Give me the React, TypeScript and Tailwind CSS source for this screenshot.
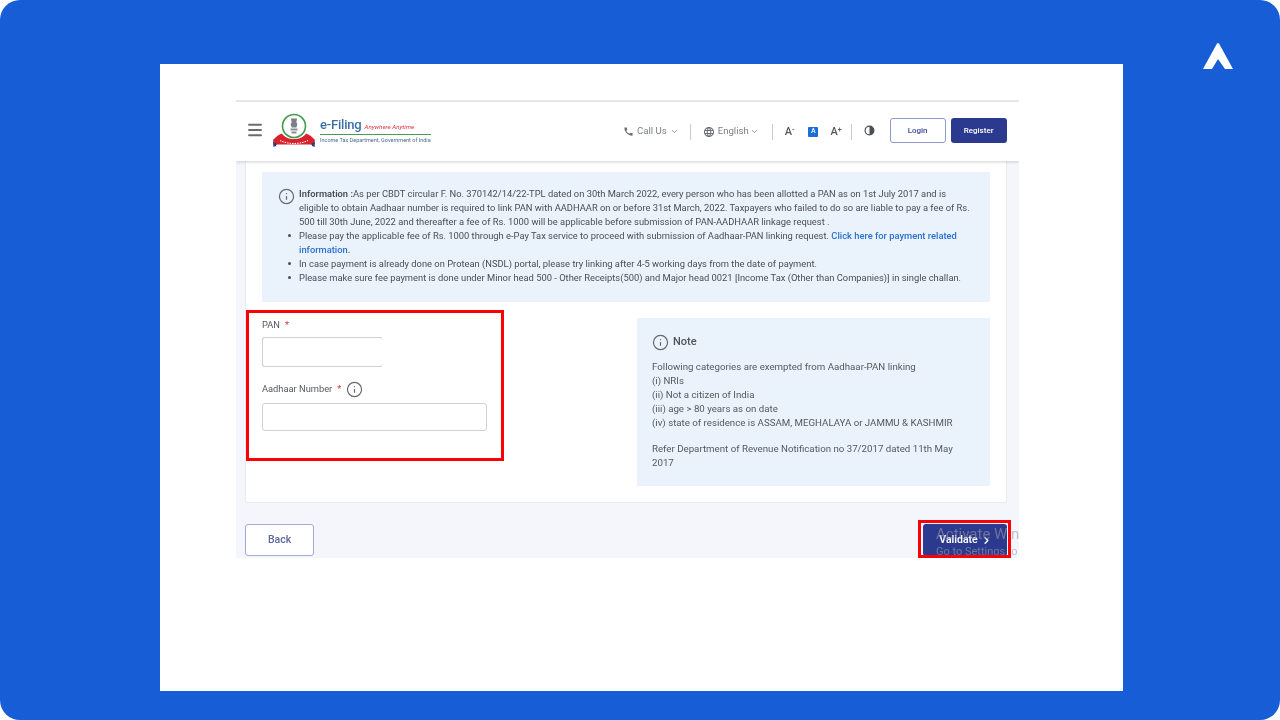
import { ChevronDown, ChevronRight, Info, Menu } from "lucide-react";
import { MdCall, MdLanguage } from "react-icons/md";

function Emblem() {
  return (
    <svg width="44" height="34" viewBox="0 0 44 34" className="shrink-0">
      <circle cx="22" cy="13" r="11.5" fill="none" stroke="#3f9a4a" strokeWidth="1.6" />
      <circle cx="22" cy="13" r="9.5" fill="#fff" />
      <path d="M19 5.5h6l-.6 4 1 1.5-1 3.5h-4.8l-1-3.500 1-1.500z" fill="#7a7f86" />
      <path d="M18.500 15.500h7v2h-7zM19.500 18.500h5v2h-5z" fill="#8b8f95" />
      <path d="M1 27c3-3.500 6-5.500 9-6.500 2 3.500 6.500 5.500 12 5.500s10-2 12-5.500c3 1 6 3 9 6.500l-1 6-3.500-1.500H5.500L2 33z" fill="#d8232f" />
      <path d="M8 27.500c4 2 9 3 14 3s10-1 14-3" fill="none" stroke="#fff" strokeWidth="1" strokeDasharray="1.500 1" />
      <path d="M1 29l3 1v3l-2.500 1zM43 29l-3 1v3l2.500 1z" fill="#263f8f" />
    </svg>
  );
}

function ContrastIcon() {
  return (
    <svg width="11" height="11" viewBox="0 0 12 12">
      <circle cx="6" cy="6" r="4.800" fill="#fff" stroke="#4b4f55" strokeWidth="1.300" />
      <path d="M6 1.200a4.800 4.800 0 0 1 0 9.600z" fill="#4b4f55" />
    </svg>
  );
}

function Divider() {
  return <div className="h-[16px] w-px bg-[#c9ccd1]" />;
}

function Bullet() {
  return <span className="absolute left-[-11px] top-[5px] h-[3px] w-[3px] rounded-full bg-[#4a4d54]" />;
}

function Header() {
  return (
    <header className="relative z-10 flex h-[59px] items-center bg-white pl-[10px] shadow-[0_1px_3px_rgba(0,0,0,0.18)]">
      <Menu size={18} strokeWidth={2.5} className="mb-[3px] text-[#6a6d72]" />
      <div className="mb-[4px] ml-[8px]">
        <Emblem />
      </div>
      <div className="ml-[4px] mt-[-2px] w-[111px]">
        <div className="flex h-[15px] items-baseline gap-[3px] leading-none">
          <span className="text-[13px] font-medium tracking-[-0.2px] text-[#3c6fa8]">e-Filing</span>
          <span className="text-[6.200px] italic text-[#e3323f]">Anywhere Anytime</span>
        </div>
        <div className="mt-[1px] h-px bg-[#4a9c52]" />
        <div className="mt-[1px] whitespace-nowrap text-[5.500px] leading-[8px] text-[#4b6d95]">
          Income Tax Department, Government of India
        </div>
      </div>
      <div className="ml-[192px] flex items-center text-[9.600px] text-[#7c7f84]">
        <MdCall size={11} className="text-[#6a6d72]" />
        <span className="ml-[3px]">Call Us</span>
        <ChevronDown size={9} className="ml-[3px]" />
        <div className="ml-[11px]">
          <Divider />
        </div>
        <MdLanguage size={12} className="ml-[12px] text-[#6a6d72]" />
        <span className="ml-[3px]">English</span>
        <ChevronDown size={9} className="ml-[1px]" />
        <div className="ml-[13px]">
          <Divider />
        </div>
        <span className="ml-[12px] text-[11px] font-medium leading-none text-[#55585d]">
          A<sup className="text-[7px]">-</sup>
        </span>
        <span className="ml-[14px] flex h-[10px] w-[10px] items-center justify-center rounded-[1px] bg-[#1a6fd8] text-[7px] font-medium text-white">
          A
        </span>
        <span className="ml-[12px] text-[11px] font-medium leading-none text-[#55585d]">
          A<sup className="text-[7px]">+</sup>
        </span>
        <div className="ml-[9px]">
          <Divider />
        </div>
        <div className="mb-[3px] ml-[12px]">
          <ContrastIcon />
        </div>
        <button className="mb-[2px] ml-[15px] flex h-[25px] w-[56px] items-center justify-center rounded-[3px] border-[1.500px] border-[#8f97cf] bg-white text-[8px] font-medium text-[#3d4a96]">
          Login
        </button>
        <button className="mb-[2px] ml-[5px] flex h-[25px] w-[56px] items-center justify-center rounded-[3px] bg-[#2b3a8f] text-[8px] font-medium text-white">
          Register
        </button>
      </div>
    </header>
  );
}

function InfoPanel() {
  return (
    <div className="flex h-[130px] bg-[#eaf3fc] pl-[16px] pt-[15px] text-[9.360px] leading-[14px] text-[#4a4d54]">
      <Info size={17} strokeWidth={1.7} className="mt-px shrink-0 text-[#65686e]" />
      <div className="ml-[4px] whitespace-nowrap">
        <p>
          <b className="font-semibold">Information :</b>As per CBDT circular F. No. 370142/14/22-TPL dated on 30th March
          2022, every person who has been allotted a PAN as on 1st July 2017 and is
          <br />
          eligible to obtain Aadhaar number is required to link PAN with AADHAAR on or before 31st March, 2022. Taxpayers
          who failed to do so are liable to pay a fee of Rs.
          <br />
          500 till 30th June, 2022 and thereafter a fee of Rs. 1000 will be applicable before submission of PAN-AADHAAR
          linkage request .
        </p>
        <ul>
          <li className="relative">
            <Bullet />
            Please pay the applicable fee of Rs. 1000 through e-Pay Tax service to proceed with submission of Aadhaar-PAN
            linking request.{" "}
            <span className="font-medium text-[#2a6fd0]">
              Click here for payment related
              <br />
              information.
            </span>
          </li>
          <li className="relative">
            <Bullet />
            In case payment is already done on Protean (NSDL) portal, please try linking after 4-5 working days from the
            date of payment.
          </li>
          <li className="relative">
            <Bullet />
            Please make sure fee payment is done under Minor head 500 - Other Receipts(500) and Major head 0021 [Income
            Tax (Other than Companies)] in single challan.
          </li>
        </ul>
      </div>
    </div>
  );
}

function Form() {
  return (
    <div className="w-[375px] text-[9.300px] text-[#55585f]">
      <div className="flex h-[14px] items-center">
        PAN <span className="ml-[5px] text-[#e3323f]">*</span>
      </div>
      <div className="mt-[5px] h-[30px] w-[121px] rounded-[3px] border-[1.500px] border-[#cfd1d4] border-r-transparent bg-white" />
      <div className="mt-[14px] flex h-[16px] items-center">
        Aadhaar Number <span className="ml-[5px] text-[#e3323f]">*</span>
        <Info size={17} strokeWidth={1.7} className="ml-[5px] text-[#65686e]" />
      </div>
      <div className="mt-[6px] h-[28px] w-[225px] rounded-[3px] border-[1.500px] border-[#cfd1d4] bg-white" />
    </div>
  );
}

function Note() {
  return (
    <div className="h-[168px] w-[353px] bg-[#eaf3fc] px-[15px] pt-[16px] text-[9.700px] leading-[14px] text-[#55585f]">
      <div className="flex h-[16px] items-center text-[11px] font-medium text-[#50535a]">
        <Info size={17} strokeWidth={1.7} className="mr-[4px] text-[#65686e]" />
        Note
      </div>
      <p className="mt-[10px]">
        Following categories are exempted from Aadhaar-PAN linking
        <br />
        (i) NRIs
        <br />
        (ii) Not a citizen of India
        <br />
        (iii) age &gt; 80 years as on date
        <br />
        (iv) state of residence is ASSAM, MEGHALAYA or JAMMU &amp; KASHMIR
      </p>
      <p className="mt-[12px]">
        Refer Department of Revenue Notification no 37/2017 dated 11th May
        <br />
        2017
      </p>
    </div>
  );
}

export default function App() {
  return (
    <div className="h-screen w-full overflow-hidden bg-white font-['Roboto',sans-serif]">
      <div className="relative h-[720px] rounded-[20px] bg-[#175dd6] pb-[29px] pl-[160px] pr-[157px] pt-[64px]">
        <svg width="30" height="27" viewBox="0 0 30 27" className="absolute left-[1203px] top-[42px]">
          <path d="M14 1.500c.5-.8 1.500-.8 2 0L30 27h-8l-7-10-6 10H0z" fill="#fff" />
        </svg>
        <div className="h-full bg-white pl-[76px] pr-[104px] pt-[36px]">
          <div className="relative h-[458px] w-[783px] overflow-hidden">
            <div className="h-[2px] bg-[#e9e9eb]" />
            <div className="h-[456px] bg-[#f4f6fb] blur-[0.6px]">
              <Header />
              <div className="mx-[9px] mr-[12px] h-[342px] rounded-b-[3px] border border-t-0 border-[#e9ebf0] bg-white px-[16px] pt-[11px]">
                <InfoPanel />
                <div className="mt-[16px] flex">
                  <Form />
                  <Note />
                </div>
              </div>
              <div className="mt-[21px] flex justify-between pl-[9px] pr-[12px]">
                <button className="h-[32px] w-[69px] rounded-[3px] border-[1.500px] border-[#a4aad8] bg-white text-[10.500px] font-medium text-[#5c669f]">
                  Back
                </button>
                <button className="flex h-[32px] w-[84px] items-center justify-center rounded-[3px] bg-[#2b3a8f] pl-[1px] text-[10.500px] font-semibold text-white">
                  Validate
                  <ChevronRight size={11} strokeWidth={3} className="ml-[3px]" />
                </button>
              </div>
            </div>
            <div className="absolute left-[700px] top-[425px] whitespace-nowrap text-[#9a9ca8]/60 blur-[0.4px]">
              <div className="text-[15px] leading-[18px]">Activate Windows</div>
              <div className="mt-[2px] text-[11px] leading-[14px]">Go to Settings to activate</div>
            </div>
            {/* annotation boxes drawn on top of the captured page */}
            <div className="absolute left-[10px] top-[210px] h-[151px] w-[258px] border-[3px] border-[#fb0007]" />
            <div className="absolute left-[682px] top-[420px] h-[38px] w-[93px] border-[3px] border-[#fb0007]" />
          </div>
        </div>
      </div>
    </div>
  );
}
